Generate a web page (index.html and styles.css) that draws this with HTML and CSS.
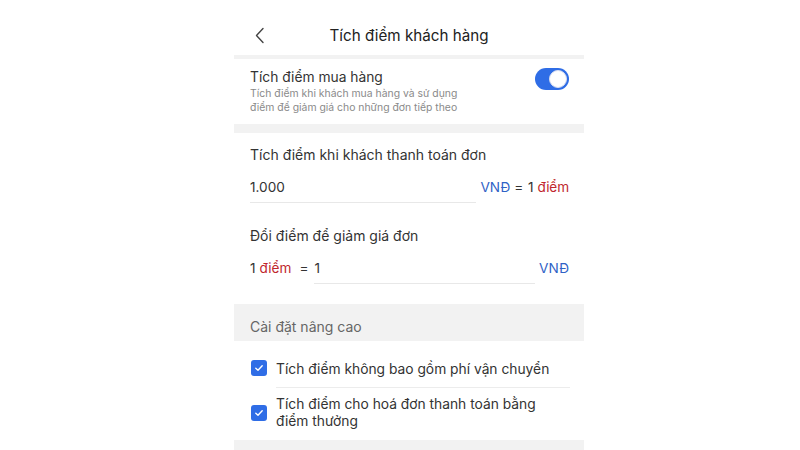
FILE: index.html
```html
<!DOCTYPE html>
<html lang="vi">
<head>
<meta charset="utf-8">
<link rel="stylesheet" href="styles.css">
</head>
<body>
<div class="phone">
  <header class="header">
    <svg class="back" width="10" height="17" viewBox="0 0 10 17"><path d="M8 1.5 L1.5 8.5 L8 15.5" fill="none" stroke="#444" stroke-width="1.4" stroke-linecap="round" stroke-linejoin="round"/></svg>
    <h1 class="title">Tích điểm khách hàng</h1>
    <span></span>
  </header>
  <div class="sep thin"></div>
  <section class="sec-toggle">
    <div class="toggle-text">
      <div class="label">Tích điểm mua hàng</div>
      <div class="desc">Tích điểm khi khách mua hàng và sử dụng<br>điểm để giảm giá cho những đơn tiếp theo</div>
    </div>
    <div class="switch"><div class="knob"></div></div>
  </section>
  <div class="sep band"></div>
  <section class="sec-rates">
    <div class="label">Tích điểm khi khách thanh toán đơn</div>
    <div class="row row1">
      <div class="input in1">1.000</div>
      <div class="unit"><span class="blue">VNĐ</span><span class="eq">=</span><span class="num">1</span><span class="red">điểm</span></div>
    </div>
    <div class="label label2">Đổi điểm để giảm giá đơn</div>
    <div class="row row2">
      <div class="pre"><span class="num">1</span><span class="red">điểm</span><span class="eq">=</span></div>
      <div class="input in2">1</div>
      <div class="unit"><span class="blue">VNĐ</span></div>
    </div>
  </section>
  <div class="adv-head">Cài đặt nâng cao</div>
  <section class="checks">
    <div class="check check1">
      <span class="box"><svg width="10" height="8" viewBox="0 0 10 8"><path d="M1.8 4.2 L4 6.2 L8.2 1.8" fill="none" stroke="#fff" stroke-width="1.4" stroke-linecap="round" stroke-linejoin="round"/></svg></span>
      <span class="check-text">Tích điểm không bao gồm phí vận chuyển</span>
    </div>
    <div class="check check2">
      <span class="box"><svg width="10" height="8" viewBox="0 0 10 8"><path d="M1.8 4.2 L4 6.2 L8.2 1.8" fill="none" stroke="#fff" stroke-width="1.4" stroke-linecap="round" stroke-linejoin="round"/></svg></span>
      <span class="check-text">Tích điểm cho hoá đơn thanh toán bằng<br>điểm thưởng</span>
    </div>
  </section>
  <div class="sep bottom"></div>
</div>
</body>
</html>
```
FILE: styles.css
```css
* { box-sizing: border-box; }
html, body { margin: 0; padding: 0; background: #fff; }
body { font-family: Inter, "Noto Sans", sans-serif; color: #333; }
.phone { width: 350px; margin-left: 234px; }
.header { height: 55px; display: grid; grid-template-columns: 1fr auto 1fr; align-items: center; padding-top: 16px; }
.back { display: block; margin-left: 21px; }
.title { margin: 0; font-size: 15.2px; font-weight: 400; color: #222; line-height: 20px; }
.sep { background: #f2f2f2; }
.thin { height: 4px; }
.band { height: 9px; }
.bottom { height: 10px; }
.sec-toggle { height: 65px; display: flex; align-items: flex-start; justify-content: space-between; padding: 9px 15px 0 16px; }
.label { font-size: 14px; color: #333; line-height: 18px; }
.sec-toggle .label { font-size: 13.8px; }
.desc { font-size: 10.4px; color: #8a8a8a; line-height: 14px; margin-top: 1px; }
.switch { width: 34px; height: 22px; border-radius: 11px; background: #2f6de6; position: relative; }
.knob { position: absolute; right: 2px; top: 2px; width: 18px; height: 18px; border-radius: 50%; background: #fff; border: 1px solid #d9def0; }
.sec-rates { height: 171px; padding: 13px 15px 0 16px; }
.row { display: flex; align-items: flex-start; font-size: 13.6px; }
.row1 { margin-top: 14px; }
.input { border-bottom: 1px solid #e8e8e8; height: 25px; line-height: 18px; color: #333; }
.in1 { width: 226px; }
.row1 .unit { margin-left: auto; letter-spacing: -0.1px; }
.unit, .pre { line-height: 18px; }
.blue { color: #2f62c6; }
.red { color: #c0262d; }
.eq { margin: 0 5px 0 4px; color: #333; }
.num { margin-right: 4px; }
.label2 { margin-top: 24px; }
.row2 { margin-top: 14px; }
.pre .num { margin-right: 4px; }
.pre .eq { margin: 0 6px 0 8px; }
.in2 { width: 221px; }
.row2 .unit { margin-left: auto; }
.adv-head { background: #f2f2f2; height: 37px; padding: 14px 16px 0; font-size: 14px; color: #666; line-height: 18px; }
.checks { height: 99px; padding: 18px 14px 0 17px; }
.check { display: flex; }
.check1 { align-items: flex-start; }
.check2 { align-items: center; margin-top: 8px; }
.box { width: 16px; height: 16px; border-radius: 3px; background: #2f6de6; display: flex; align-items: center; justify-content: center; flex: none; margin-right: 9px; }
.check1 .box { margin-top: 1px; }
.check-text { font-size: 13.8px; color: #333; line-height: 17px; flex: 1; }
.check1 .check-text { line-height: 20px; padding-bottom: 8px; border-bottom: 1px solid #ececec; }
```
